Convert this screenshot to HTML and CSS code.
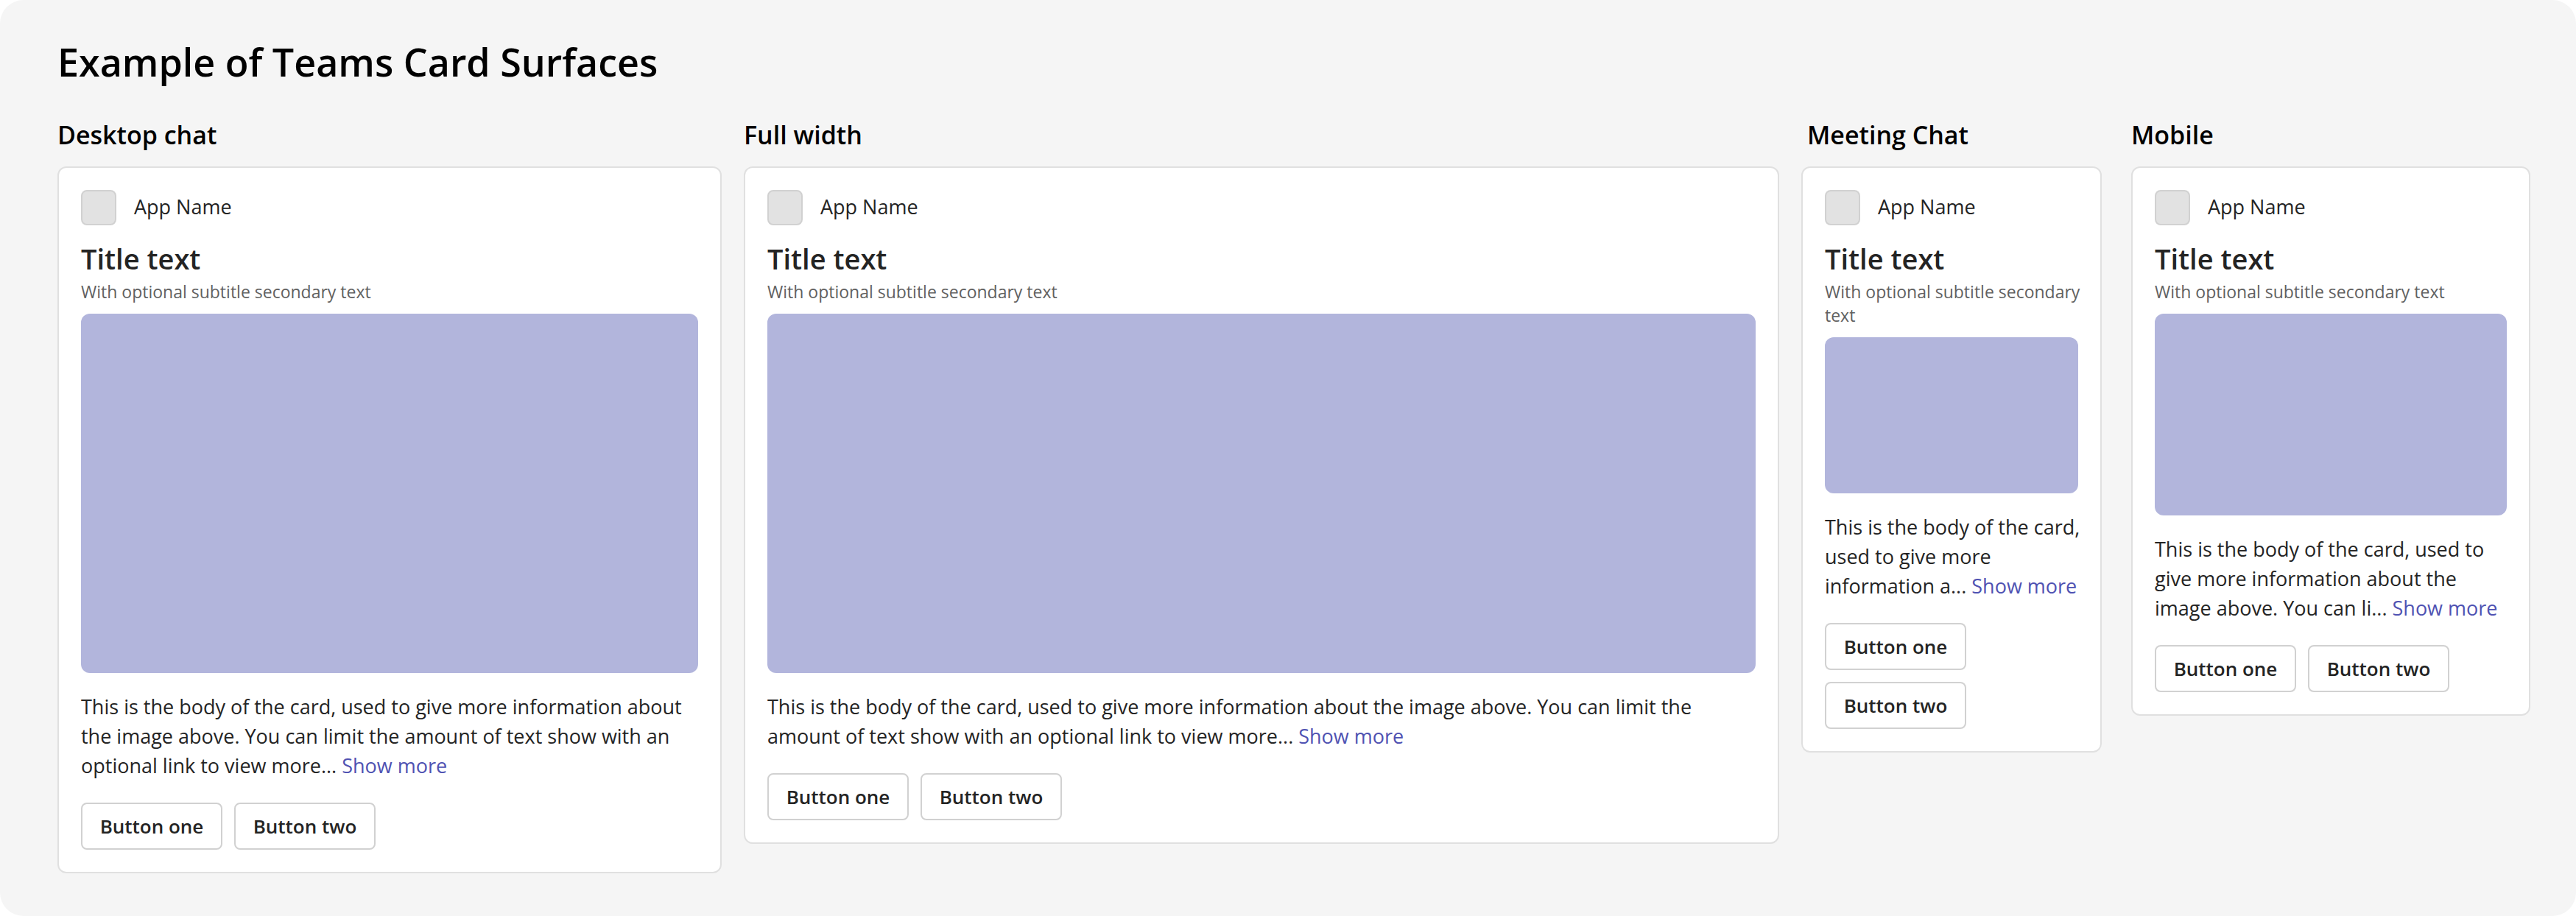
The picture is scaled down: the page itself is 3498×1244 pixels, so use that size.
FILE: index.html
```
<!DOCTYPE html>
<html lang="en">
<head>
<meta charset="utf-8">
<title>Example of Teams Card Surfaces</title>
<link rel="stylesheet" href="styles.css">
</head>
<body>
<main class="board">
  <h1 class="board-title">Example of Teams Card Surfaces</h1>
  <div class="surfaces">
    <section class="surface surface-desktop">
      <h2 class="surface-name">Desktop chat</h2>
      <article class="card">
        <header class="app"><span class="app-icon"></span><span class="app-name">App Name</span></header>
        <h3 class="card-title">Title text</h3>
        <p class="card-subtitle">With optional subtitle secondary text</p>
        <div class="card-image"></div>
        <p class="card-body">This is the body of the card, used to give more information about<br>the image above. You can limit the amount of text show with an<br>optional link to view more... <a class="more" href="#">Show more</a></p>
        <div class="actions"><button class="btn" type="button">Button one</button><button class="btn" type="button">Button two</button></div>
      </article>
    </section>
    <section class="surface surface-full">
      <h2 class="surface-name">Full width</h2>
      <article class="card">
        <header class="app"><span class="app-icon"></span><span class="app-name">App Name</span></header>
        <h3 class="card-title">Title text</h3>
        <p class="card-subtitle">With optional subtitle secondary text</p>
        <div class="card-image"></div>
        <p class="card-body">This is the body of the card, used to give more information about the image above. You can limit the<br>amount of text show with an optional link to view more... <a class="more" href="#">Show more</a></p>
        <div class="actions"><button class="btn" type="button">Button one</button><button class="btn" type="button">Button two</button></div>
      </article>
    </section>
    <section class="surface surface-meeting">
      <h2 class="surface-name">Meeting Chat</h2>
      <article class="card">
        <header class="app"><span class="app-icon"></span><span class="app-name">App Name</span></header>
        <h3 class="card-title">Title text</h3>
        <p class="card-subtitle">With optional subtitle secondary<br>text</p>
        <div class="card-image"></div>
        <p class="card-body">This is the body of the card,<br>used to give more<br>information a... <a class="more" href="#">Show more</a></p>
        <div class="actions"><button class="btn" type="button">Button one</button><button class="btn" type="button">Button two</button></div>
      </article>
    </section>
    <section class="surface surface-mobile">
      <h2 class="surface-name">Mobile</h2>
      <article class="card">
        <header class="app"><span class="app-icon"></span><span class="app-name">App Name</span></header>
        <h3 class="card-title">Title text</h3>
        <p class="card-subtitle">With optional subtitle secondary text</p>
        <div class="card-image"></div>
        <p class="card-body">This is the body of the card, used to<br>give more information about the<br>image above. You can li... <a class="more" href="#">Show more</a></p>
        <div class="actions"><button class="btn" type="button">Button one</button><button class="btn" type="button">Button two</button></div>
      </article>
    </section>
  </div>
</main>
</body>
</html>
```
FILE: styles.css
```
* {
  box-sizing: border-box;
  margin: 0;
}

body {
  background: #fff;
  color: #242424;
  font-family: "Segoe UI", "Open Sans", "Noto Sans", sans-serif;
}

.board {
  min-height: 100vh;
  padding: 48px 62px 58px 78px;
  border-radius: 32px;
  background: #f5f5f5;
}

.board-title {
  color: #000;
  font-size: 52px;
  font-weight: 600;
  line-height: 72px;
}

.surfaces {
  display: flex;
  align-items: flex-start;
  gap: 30px;
  margin-top: 38px;
}

.surface {
  min-width: 0;
}

.surface-desktop { flex: 902 1 0; }
.surface-full { flex: 1406 1 0; }
.surface-meeting { flex: 408 1 0; }
.surface-mobile { flex: 542 1 0; margin-left: 10px; }

.surface-name {
  margin-bottom: 18px;
  color: #000;
  font-size: 34px;
  font-weight: 600;
  line-height: 50px;
}

.surface-meeting .surface-name {
  padding-left: 8px;
}

.card {
  padding: 30px;
  border: 2px solid #e0e0e0;
  border-radius: 12px;
  background: #fff;
}

.app {
  display: flex;
  align-items: center;
  gap: 24px;
}

.app-icon {
  width: 48px;
  height: 48px;
  border: 2px solid #d1d1d1;
  border-radius: 8px;
  background: #e2e2e2;
}

.app-name {
  padding-bottom: 2px;
  font-size: 27px;
  line-height: 40px;
}

.card-title {
  margin-top: 18px;
  font-size: 38px;
  font-weight: 600;
  line-height: 54px;
}

.card-subtitle {
  margin-top: 2px;
  color: #616161;
  font-size: 23px;
  line-height: 32px;
  white-space: nowrap;
}

.card-image {
  height: 488px;
  margin-top: 14px;
  border-radius: 12px;
  background: #b2b5dc;
}

.surface-meeting .card-image { height: 212px; }
.surface-mobile .card-image { height: 274px; }

.card-body {
  margin-top: 26px;
  font-size: 27px;
  line-height: 40px;
  white-space: nowrap;
}

.more {
  color: #4f52b2;
  text-decoration: none;
}

.actions {
  display: flex;
  gap: 16px;
  margin-top: 30px;
}

.surface-meeting .actions {
  flex-direction: column;
  align-items: flex-start;
}

.btn {
  width: 192px;
  height: 64px;
  padding: 0;
  border: 2px solid #d1d1d1;
  border-radius: 8px;
  background: #fff;
  color: #242424;
  font: inherit;
  font-size: 26px;
  font-weight: 600;
}
```
